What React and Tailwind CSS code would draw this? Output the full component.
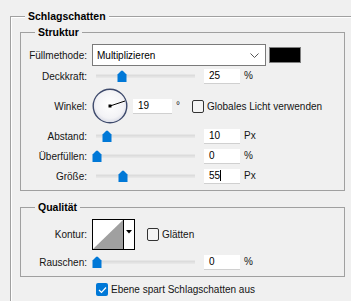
import React from 'react';

const Label = ({ children }) => (
  <div className="w-[66px] shrink-0 pr-0 text-right whitespace-nowrap">{children}</div>
);

const Thumb = () => (
  <svg width="10" height="12" viewBox="0 0 10 12" className="block">
    <path d="M0.5 4.5 L4 1 Q5 0 6 1 L9.5 4.5 V12 H0.5 Z" fill="#0078d7" />
  </svg>
);

// track runs from x=4 to x=103 inside the 112px control
const Slider = ({ pos }) => (
  <div className="relative w-[112px] h-full shrink-0">
    <div className="absolute left-[4px] w-[99px] top-1/2 -translate-y-1/2 h-[3px] bg-[#dcdcdc] border-b border-[#e8e8e8]" />
    <div className="absolute top-1/2 -translate-y-1/2" style={{ left: pos }}>
      <Thumb />
    </div>
  </div>
);

const NumInput = ({ value, caret, w = 'w-[36px]' }) => (
  <div className={`${w} h-[15px] bg-white border-b border-[#d0d0d0] pl-[5px] leading-[15px] text-black flex items-center`}>
    <span>{value}</span>
    {caret && <span className="w-px h-[11px] bg-black" />}
  </div>
);

const Unit = ({ children }) => (
  <div className="ml-[4px] self-start mt-[1px] leading-[12px]">{children}</div>
);

const SliderRow = ({ label, pos, value, unit, caret }) => (
  <div className="flex items-center h-[20px]">
    <Label>{label}</Label>
    <div className="ml-[5px] h-full flex items-center">
      <Slider pos={pos} />
      <div className="flex h-[15px]">
        <NumInput value={value} caret={caret} />
        <Unit>{unit}</Unit>
      </div>
    </div>
  </div>
);

const Checkbox = ({ checked }) =>
  checked ? (
    <div className="w-[12px] h-[13px] rounded-[2px] bg-[#0078d7] flex items-center justify-center shrink-0">
      <svg width="9" height="8" viewBox="0 0 9 8">
        <path d="M1 4 L3.5 6.5 L8 1.5" stroke="white" strokeWidth="1.2" fill="none" />
      </svg>
    </div>
  ) : (
    <div className="w-[12px] h-[13px] rounded-[2px] border border-[#333] bg-[#f4f4f4] shrink-0" />
  );

const GroupTitle = ({ children, className }) => (
  <div className={`absolute -top-[7px] px-[3px] bg-[#f0f0f0] font-bold text-[10.5px] text-black leading-[13px] ${className}`}>
    {children}
  </div>
);

export default function App() {
  return (
    <div className="w-[351px] h-[301px] overflow-hidden bg-[#f0f0f0] pt-[16px] pl-[10px] font-['Liberation_Sans',Arial,sans-serif] text-[10px] text-[#141414]">
      <div className="relative w-[400px] h-[320px] border-l border-t border-[#a0a0a0] shadow-[inset_1px_1px_0_#ffffff] pl-[9px] pt-[15px]">
        <GroupTitle className="left-[14px]">Schlagschatten</GroupTitle>

        {/* Struktur */}
        <div className="relative w-[325px] h-[159px] border border-[#a0a0a0] pt-[11px]">
          <GroupTitle className="left-[14px]">Struktur</GroupTitle>

          <div className="flex items-center h-[22px]">
            <Label>Füllmethode:</Label>
            <div className="ml-[5px] w-[174px] h-[22px] bg-white border border-[#7a7a7a] flex items-center justify-between pl-[4px] pr-[6px] text-black">
              <span>Multiplizieren</span>
              <svg width="9" height="5" viewBox="0 0 9 5">
                <path d="M0.5 0.5 L4.5 4.5 L8.5 0.5" stroke="#555" strokeWidth="1" fill="none" />
              </svg>
            </div>
            <div className="ml-[3px] w-[32px] h-[16px] bg-black border border-[#7f7f7f]" />
          </div>

          <SliderRow label="Deckkraft:" pos="25px" value="25" unit="%" />

          <div className="flex items-center h-[40px]">
            <Label>Winkel:</Label>
            <div className="ml-[5px] w-[36px] h-[36px] shrink-0">
              <svg width="36" height="36" viewBox="0 0 36 36">
                <defs>
                  <radialGradient id="dial" cx="50%" cy="45%" r="55%">
                    <stop offset="0%" stopColor="#ffffff" />
                    <stop offset="75%" stopColor="#f3f3f6" />
                    <stop offset="100%" stopColor="#d9dbe6" />
                  </radialGradient>
                </defs>
                <circle cx="18" cy="18" r="16.8" fill="url(#dial)" stroke="#3e4a6c" strokeWidth="1.4" />
                <line x1="18" y1="18" x2="33" y2="13" stroke="#000" strokeWidth="1" />
                <rect x="16.5" y="16.5" width="3" height="3" fill="#000" />
              </svg>
            </div>
            <div className="ml-[5px] flex h-[15px]">
              <NumInput value="19" w="w-[39px]" />
              <Unit>°</Unit>
            </div>
            <div className="ml-[12px] flex items-center gap-[3px]">
              <Checkbox />
              <span>Globales Licht verwenden</span>
            </div>
          </div>

          <SliderRow label="Abstand:" pos="10px" value="10" unit="Px" />
          <SliderRow label="Überfüllen:" pos="0px" value="0" unit="%" />
          <SliderRow label="Größe:" pos="26px" value="55" unit="Px" caret />
        </div>

        {/* Qualität */}
        <div className="relative mt-[16px] w-[325px] h-[70px] border border-[#a0a0a0] pt-[11px]">
          <GroupTitle className="left-[14px]">Qualität</GroupTitle>

          <div className="flex items-center h-[31px]">
            <Label>Kontur:</Label>
            <div className="ml-[5px] w-[43px] h-[31px] border border-black bg-white flex shrink-0">
              <svg width="30" height="29" viewBox="0 0 30 29" className="block">
                <polygon points="0,29 30,0 30,29" fill="#a0a0a0" />
              </svg>
              <div className="w-[11px] h-full border-l border-black flex items-start justify-center pt-[10px]">
                <svg width="6" height="4" viewBox="0 0 6 4">
                  <polygon points="0,0 6,0 3,3.5" fill="#000" />
                </svg>
              </div>
            </div>
            <div className="ml-[12px] flex items-center gap-[3px]">
              <Checkbox />
              <span>Glätten</span>
            </div>
          </div>

          <div className="mt-[2px]">
            <SliderRow label="Rauschen:" pos="0px" value="0" unit="%" />
          </div>
        </div>

        <div className="mt-[6px] ml-[76px] flex items-center gap-[3px] h-[13px]">
          <Checkbox checked />
          <span>Ebene spart Schlagschatten aus</span>
        </div>
      </div>
    </div>
  );
}
